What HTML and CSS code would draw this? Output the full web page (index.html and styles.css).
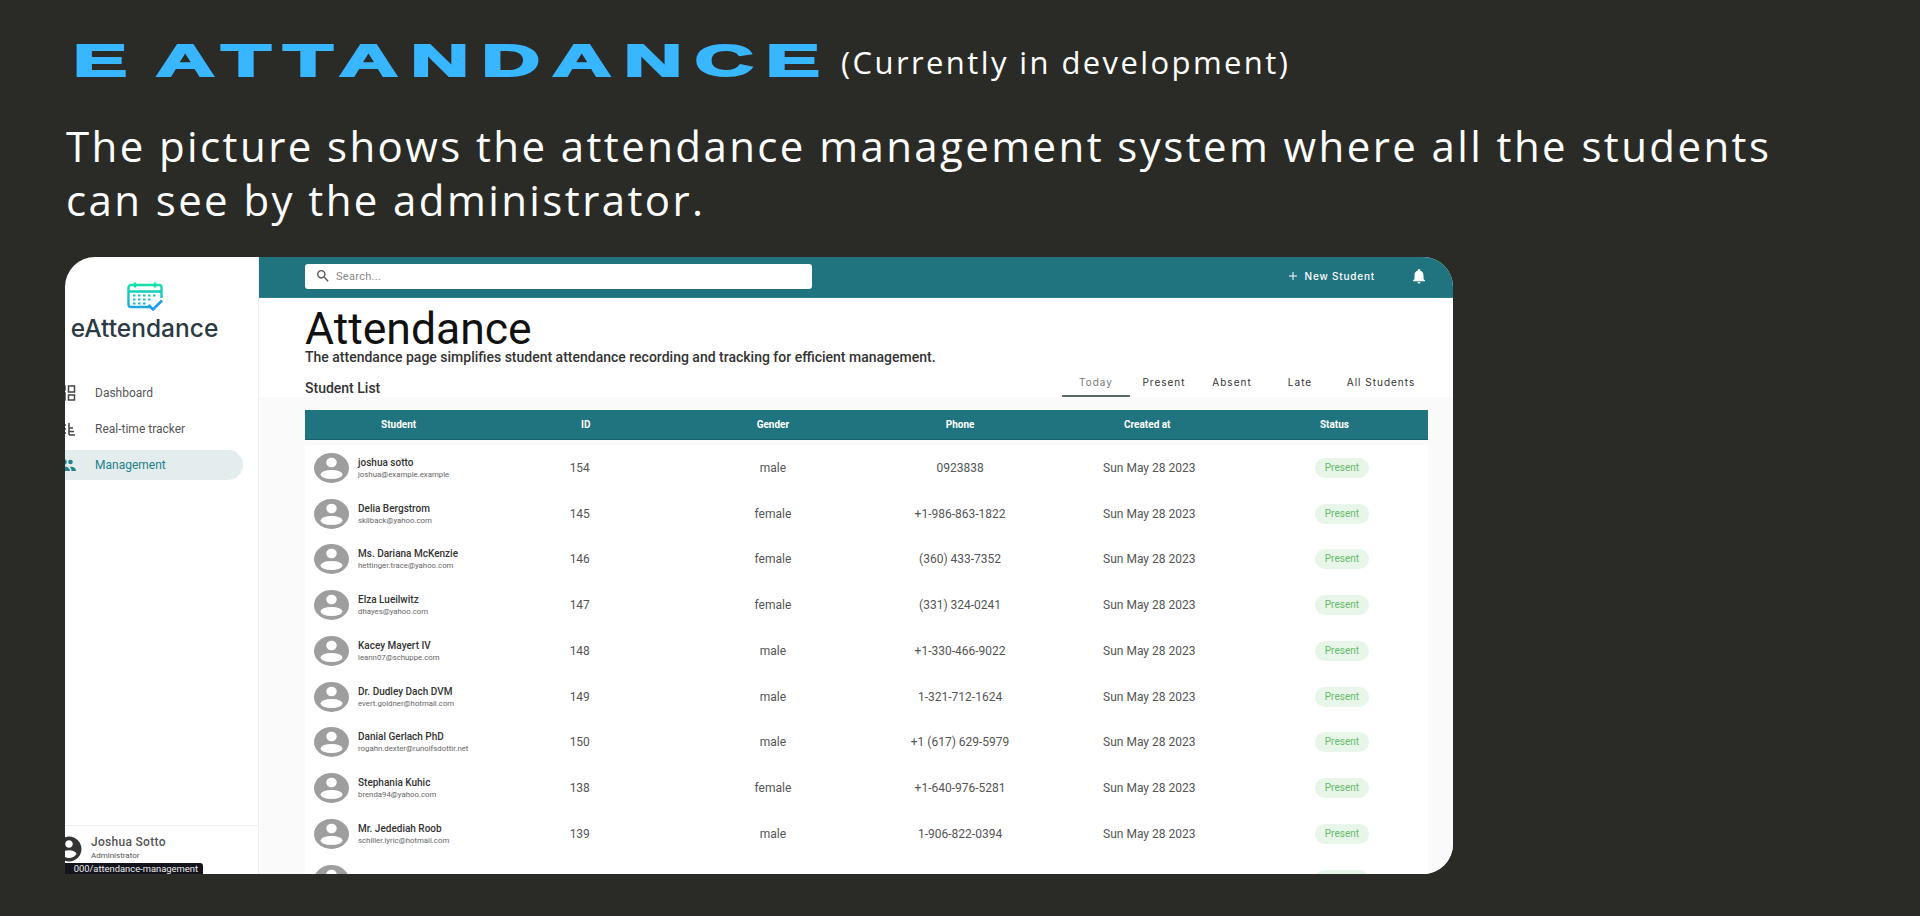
FILE: index.html
```html
<!DOCTYPE html>
<html lang="en">
<head>
    <meta charset="UTF-8">
    <meta name="viewport" content="width=device-width, initial-scale=1.0">
    <title>E Attandance</title>
    <link rel="stylesheet" href="styles.css">
</head>
<body>
    <svg class="defs" width="0" height="0" aria-hidden="true">
        <defs>
            <linearGradient id="logoGrad" gradientUnits="userSpaceOnUse" x1="0" y1="0" x2="0" y2="30">
                <stop offset="0" stop-color="#12e6a0"/>
                <stop offset="1" stop-color="#1d9bf0"/>
            </linearGradient>
            <symbol id="avatar" viewBox="0 0 35 30" preserveAspectRatio="none">
                <ellipse cx="17.5" cy="15" rx="17.5" ry="15" fill="#9e9e9e"/>
                <ellipse cx="17.5" cy="9.5" rx="5.2" ry="4.8" fill="#fff"/>
                <ellipse cx="17.5" cy="21.5" rx="11" ry="4.6" fill="#fff"/>
            </symbol>
        </defs>
    </svg>

    <header class="intro">
        <div class="title-row">
            <div class="brand-box"><h1 class="brand">E ATTANDANCE</h1></div>
            <span class="dev-note">(Currently in development)</span>
        </div>
        <p class="lead">The picture shows the attendance management system where all the students<br>can see by the administrator.</p>
    </header>

    <section class="frame">
        <aside class="sidebar">
            <div class="logo">
                <svg class="logo-icon" viewBox="0 0 36 30" fill="none" stroke="url(#logoGrad)" stroke-width="2.4">
                    <path d="M23 25H4a2.500 2.500 0 0 1-2.500-2.500V5.500A2.500 2.500 0 0 1 4 3h28a2.500 2.500 0 0 1 2.500 2.500V16"/>
                    <path d="M1.500 9.500h33M8 .5v5M28 .5v5"/>
                    <path d="M6 13.500h2.500M11 13.500h2.500M16 13.500h2.500M21 13.500h2.500M26 13.500h2.500M6 17.500h2.500M11 17.500h2.500M16 17.500h2.500M21 17.500h2.500M6 21.500h2.500M11 21.500h2.500M16 21.500h2.500" stroke-width="2.2"/>
                    <path d="M21.500 23l4.500 4.500 9-9" stroke="#1d9bf0" stroke-width="2.6"/>
                </svg>
                <div class="logo-name">eAttendance</div>
            </div>
            <nav class="nav">
                <a class="nav-item">
                    <svg class="nav-icon" viewBox="0 0 18 18" fill="none" stroke="currentColor" stroke-width="1.500">
                        <rect x="1" y="2" width="6" height="4"/><rect x="1" y="9" width="6" height="7"/>
                        <rect x="10.500" y="2" width="6" height="6"/><rect x="10.500" y="11" width="6" height="5"/>
                    </svg>
                    Dashboard
                </a>
                <a class="nav-item">
                    <svg class="nav-icon" viewBox="0 0 18 18" fill="none" stroke="currentColor" stroke-width="1.500">
                        <path d="M0 5h8M0 9h8M0 13h8M5 2v14M11 3v12M11 8h4M11 11.500h5M11 15h6"/>
                    </svg>
                    Real-time tracker
                </a>
                <a class="nav-item active">
                    <svg class="nav-icon" viewBox="0 0 18 18" fill="currentColor">
                        <circle cx="6" cy="6" r="2.800"/><circle cx="12.500" cy="6" r="2.300"/>
                        <path d="M0 15c0-3 3-4.500 6-4.500s6 1.500 6 4.500zM13.500 15c0-1.800-.6-3-1.700-4.100 2.800-.4 6.200.8 6.200 4.100z"/>
                    </svg>
                    Management
                </a>
            </nav>
            <div class="user">
                <svg class="user-avatar" viewBox="0 0 24 24" fill="#333">
                    <path d="M12 2C6.480 2 2 6.480 2 12s4.480 10 10 10 10-4.480 10-10S17.520 2 12 2zm0 3c1.660 0 3 1.340 3 3s-1.340 3-3 3-3-1.340-3-3 1.340-3 3-3zm0 14.200c-2.500 0-4.710-1.280-6-3.220.030-1.990 4-3.080 6-3.080 1.990 0 5.970 1.090 6 3.080-1.290 1.940-3.500 3.220-6 3.220z"/>
                </svg>
                <div>
                    <div class="user-name">Joshua Sotto</div>
                    <div class="user-role">Administrator</div>
                </div>
            </div>
            <div class="link-tip">000/attendance-management</div>
        </aside>

        <main class="main">
            <div class="topbar">
                <div class="search">
                    <svg class="search-icon" viewBox="0 0 24 24" fill="#555">
                        <path d="M15.500 14h-.790l-.280-.270C15.410 12.590 16 11.110 16 9.500 16 5.910 13.090 3 9.500 3S3 5.910 3 9.500 5.910 16 9.500 16c1.610 0 3.090-.590 4.230-1.570l.270.280v.790l5 4.990L20.490 19l-4.990-5zm-6 0C7.010 14 5 11.990 5 9.500S7.010 5 9.500 5 14 7.010 14 9.500 11.990 14 9.500 14z"/>
                    </svg>
                    <span>Search...</span>
                </div>
                <div class="new-student">
                    <svg class="plus" viewBox="0 0 10 10" stroke="#fff" stroke-width="1"><path d="M5 1v8M1 5h8"/></svg>
                    New Student
                </div>
                <svg class="bell" viewBox="0 0 24 24" fill="#fff">
                    <path d="M12 22c1.100 0 2-.900 2-2h-4c0 1.100.890 2 2 2zm6-6v-5c0-3.070-1.640-5.640-4.500-6.320V4c0-.830-.670-1.500-1.500-1.500s-1.500.670-1.500 1.500v.680C7.630 5.360 6 7.920 6 11v5l-2 2v1h16v-1l-2-2z"/>
                </svg>
            </div>

            <div class="page-head">
                <h2 class="page-title">Attendance</h2>
                <p class="page-sub">The attendance page simplifies student attendance recording and tracking for efficient management.</p>
                <div class="list-bar">
                    <span class="list-title">Student List</span>
                    <div class="tabs">
                        <span class="tab current">Today</span>
                        <span class="tab">Present</span>
                        <span class="tab">Absent</span>
                        <span class="tab">Late</span>
                        <span class="tab tab-wide">All Students</span>
                    </div>
                </div>
            </div>

            <div class="list-area">
                <div class="table-head">
                    <span>Student</span><span>ID</span><span>Gender</span><span>Phone</span><span>Created at</span><span>Status</span>
                </div>
                <div class="rows">
                    <div class="row">
                        <div class="student"><svg class="avatar"><use href="#avatar"/></svg><div><div class="name">joshua sotto</div><div class="email">joshua@example.example</div></div></div>
                        <span class="id">154</span><span>male</span><span>0923838</span><span class="created">Sun May 28 2023</span><span class="status"><b class="pill">Present</b></span>
                    </div>
                    <div class="row">
                        <div class="student"><svg class="avatar"><use href="#avatar"/></svg><div><div class="name">Delia Bergstrom</div><div class="email">skilback@yahoo.com</div></div></div>
                        <span class="id">145</span><span>female</span><span>+1-986-863-1822</span><span class="created">Sun May 28 2023</span><span class="status"><b class="pill">Present</b></span>
                    </div>
                    <div class="row">
                        <div class="student"><svg class="avatar"><use href="#avatar"/></svg><div><div class="name">Ms. Dariana McKenzie</div><div class="email">hettinger.trace@yahoo.com</div></div></div>
                        <span class="id">146</span><span>female</span><span>(360) 433-7352</span><span class="created">Sun May 28 2023</span><span class="status"><b class="pill">Present</b></span>
                    </div>
                    <div class="row">
                        <div class="student"><svg class="avatar"><use href="#avatar"/></svg><div><div class="name">Elza Lueilwitz</div><div class="email">dhayes@yahoo.com</div></div></div>
                        <span class="id">147</span><span>female</span><span>(331) 324-0241</span><span class="created">Sun May 28 2023</span><span class="status"><b class="pill">Present</b></span>
                    </div>
                    <div class="row">
                        <div class="student"><svg class="avatar"><use href="#avatar"/></svg><div><div class="name">Kacey Mayert IV</div><div class="email">leann07@schuppe.com</div></div></div>
                        <span class="id">148</span><span>male</span><span>+1-330-466-9022</span><span class="created">Sun May 28 2023</span><span class="status"><b class="pill">Present</b></span>
                    </div>
                    <div class="row">
                        <div class="student"><svg class="avatar"><use href="#avatar"/></svg><div><div class="name">Dr. Dudley Dach DVM</div><div class="email">evert.goldner@hotmail.com</div></div></div>
                        <span class="id">149</span><span>male</span><span>1-321-712-1624</span><span class="created">Sun May 28 2023</span><span class="status"><b class="pill">Present</b></span>
                    </div>
                    <div class="row">
                        <div class="student"><svg class="avatar"><use href="#avatar"/></svg><div><div class="name">Danial Gerlach PhD</div><div class="email">rogahn.dexter@runolfsdottir.net</div></div></div>
                        <span class="id">150</span><span>male</span><span>+1 (617) 629-5979</span><span class="created">Sun May 28 2023</span><span class="status"><b class="pill">Present</b></span>
                    </div>
                    <div class="row">
                        <div class="student"><svg class="avatar"><use href="#avatar"/></svg><div><div class="name">Stephania Kuhic</div><div class="email">brenda94@yahoo.com</div></div></div>
                        <span class="id">138</span><span>female</span><span>+1-640-976-5281</span><span class="created">Sun May 28 2023</span><span class="status"><b class="pill">Present</b></span>
                    </div>
                    <div class="row">
                        <div class="student"><svg class="avatar"><use href="#avatar"/></svg><div><div class="name">Mr. Jedediah Roob</div><div class="email">schiller.lyric@hotmail.com</div></div></div>
                        <span class="id">139</span><span>male</span><span>1-906-822-0394</span><span class="created">Sun May 28 2023</span><span class="status"><b class="pill">Present</b></span>
                    </div>
                    <div class="row">
                        <div class="student"><svg class="avatar"><use href="#avatar"/></svg><div><div class="name">Ozella Boyle</div></div></div>
                        <span></span><span></span><span></span><span></span><span class="status"><b class="pill">Present</b></span>
                    </div>
                </div>
            </div>
        </main>
    </section>
</body>
</html>
```

FILE: styles.css
```css
* {
    box-sizing: border-box;
}
html, body {
    height: 100%;
}
body {
    margin: 0;
    padding: 0 0 0 65px;
    overflow: hidden;
    background-color: #2a2b26;
    font-family: Roboto, "Liberation Sans", sans-serif;
}
.defs {
    display: block;
    height: 0;
}

/* heading above the screenshot */
.intro {
    height: 257px;
    padding-top: 36px;
    color: #fff;
}
.title-row {
    display: flex;
    align-items: center;
    height: 50px;
}
.brand-box {
    width: 776px;
    padding-left: 8px;
}
.brand {
    display: inline-block;
    margin: 0;
    font-family: "Liberation Sans", Arial, sans-serif;
    font-size: 45px;
    line-height: 50px;
    font-weight: 700;
    letter-spacing: 7px;
    word-spacing: -8.700px;
    white-space: nowrap;
    color: #38b6ff;
    -webkit-text-stroke: 2px #38b6ff;
    transform: scaleX(1.8);
    transform-origin: left center;
}
.dev-note {
    padding-top: 1px;
    font-family: "Open Sans", sans-serif;
    font-size: 31px;
    letter-spacing: 2.400px;
    white-space: nowrap;
}
.lead {
    margin: 33px 0 0 1px;
    font-family: "Open Sans", sans-serif;
    font-size: 42px;
    line-height: 54px;
    letter-spacing: 2.400px;
    white-space: nowrap;
}

/* the app screenshot */
.frame {
    display: flex;
    position: relative;
    width: 1388px;
    height: 617px;
    overflow: hidden;
    background-color: #fff;
    border-radius: 30px 30px 30px 0;
}
.sidebar {
    display: flex;
    flex-direction: column;
    position: relative;
    width: 194px;
    flex-shrink: 0;
    border-right: 1px solid #eee;
}
.logo {
    display: flex;
    flex-direction: column;
    align-items: center;
    padding: 25px 34px 0 0;
    height: 121px;
}
.logo-icon {
    width: 36px;
    height: 30px;
    flex-shrink: 0;
}
.logo-name {
    margin-top: 1px;
    font-family: Inter, sans-serif;
    font-size: 24.500px;
    line-height: 30px;
    font-weight: 500;
    white-space: nowrap;
    color: #2b3a42;
}
.nav {
    display: flex;
    flex-direction: column;
    gap: 6px;
}
.nav-item {
    display: flex;
    align-items: center;
    gap: 19px;
    height: 30px;
    width: 178px;
    font-size: 12px;
    color: #555;
}
.nav-item.active {
    background-color: #e3eded;
    border-radius: 0 15px 15px 0;
    color: #24808a;
}
.nav-icon {
    width: 18px;
    height: 18px;
    margin-left: -7px;
    color: #444;
    flex-shrink: 0;
}
.active .nav-icon {
    color: #24808a;
}
.user {
    display: flex;
    align-items: flex-start;
    gap: 7px;
    margin-top: auto;
    height: 49px;
    border-top: 1px solid #eee;
    padding-top: 8px;
}
.user-avatar {
    width: 30px;
    height: 30px;
    margin-left: -11px;
    flex-shrink: 0;
}
.user-name {
    font-size: 12px;
    line-height: 17px;
    font-weight: 500;
    letter-spacing: 0.300px;
    color: #555;
}
.user-role {
    font-size: 8px;
    line-height: 10px;
    color: #555;
}
.link-tip {
    position: absolute;
    left: 0;
    bottom: 0;
    width: 138px;
    height: 11px;
    padding-right: 5px;
    overflow: hidden;
    background-color: #14141c;
    border-radius: 0 3px 0 0;
    font-size: 9.400px;
    line-height: 11px;
    text-align: right;
    white-space: nowrap;
    color: #eee;
}

.main {
    display: flex;
    flex-direction: column;
    flex: 1;
    min-width: 0;
}
.topbar {
    display: flex;
    align-items: center;
    height: 41px;
    padding: 0 25px 2px 46px;
    background-color: #1f747f;
    border-bottom: 1px solid #2a7f89;
    flex-shrink: 0;
}
.search {
    display: flex;
    align-items: center;
    gap: 5px;
    width: 507px;
    height: 25px;
    padding-left: 10px;
    background-color: #fff;
    border-radius: 3px;
    font-size: 11px;
    letter-spacing: 0.300px;
    color: #888;
}
.search-icon {
    width: 16px;
    height: 16px;
}
.new-student {
    display: flex;
    align-items: center;
    gap: 7px;
    margin-left: auto;
    font-family: Inter, sans-serif;
    font-size: 10px;
    font-weight: 500;
    letter-spacing: 0.800px;
    color: #fff;
}
.plus {
    width: 10px;
    height: 10px;
}
.bell {
    width: 18px;
    height: 18px;
    margin-left: 35px;
}

.page-head {
    height: 99px;
    padding: 11px 0 0 46px;
    flex-shrink: 0;
}
.page-title {
    margin: 0;
    font-size: 44.500px;
    line-height: 40px;
    font-weight: 400;
    color: #111;
}
.page-sub {
    margin: 0;
    font-size: 14px;
    line-height: 16px;
    font-weight: 500;
    white-space: nowrap;
    color: #333;
}
.list-bar {
    display: flex;
    align-items: flex-end;
    justify-content: space-between;
    height: 32px;
    padding-right: 25px;
}
.list-title {
    padding-bottom: 1px;
    font-size: 14px;
    font-weight: 500;
    color: #333;
}
.tabs {
    display: flex;
}
.tab {
    display: flex;
    justify-content: center;
    width: 68px;
    height: 26px;
    padding-top: 5px;
    border-bottom: 2px solid transparent;
    font-family: Inter, sans-serif;
    font-size: 10px;
    letter-spacing: 1px;
    white-space: nowrap;
    color: #333;
}
.tab-wide {
    width: 94px;
}
.tab.current {
    border-bottom-color: #5c6b62;
    color: #777;
}

.list-area {
    flex: 1;
    padding: 13px 25px 0 46px;
    background-color: #fafafa;
}
.table-head,
.row {
    display: grid;
    grid-template-columns: repeat(6, 1fr);
    align-items: center;
    text-align: center;
}
.table-head {
    height: 30px;
    background-color: #1f747f;
    border-bottom: 1px solid #17616b;
    font-size: 10px;
    font-weight: 700;
    color: #fff;
}
.rows {
    margin-top: 5px;
    background-color: #fff;
}
.row {
    height: 45.750px;
    font-size: 12px;
    color: #555;
}
.student {
    display: flex;
    align-items: center;
    gap: 9px;
    padding-left: 9px;
    text-align: left;
    white-space: nowrap;
}
.avatar {
    width: 35px;
    height: 30px;
    flex-shrink: 0;
}
.name {
    font-size: 10px;
    line-height: 13px;
    font-weight: 500;
    color: #333;
}
.email {
    font-size: 7.800px;
    line-height: 11px;
    color: #666;
}
.id {
    padding-right: 12px;
}
.created {
    padding-left: 4px;
}
.status {
    padding-left: 15px;
}
.pill {
    display: inline-block;
    width: 54px;
    height: 20px;
    border-radius: 10px;
    background-color: #e8f5e9;
    font-size: 10px;
    line-height: 20px;
    font-weight: 400;
    color: #66bb6a;
}
```
